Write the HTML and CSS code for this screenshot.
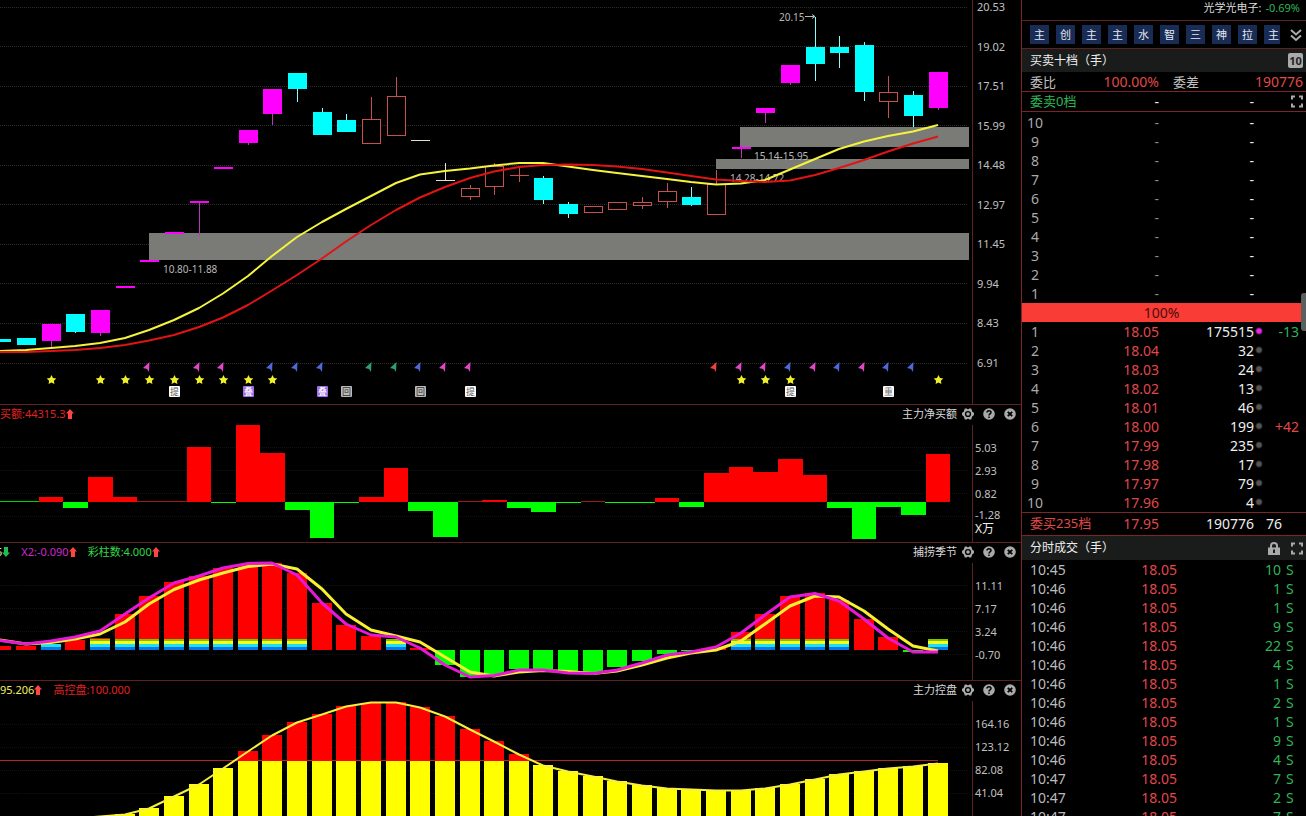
FILE: index.html
```html
<!DOCTYPE html>
<html lang="zh-CN">
<head>
<meta charset="utf-8">
<title>行情</title>
<link rel="stylesheet" href="styles.css">
</head>
<body>
<svg class="sprite" aria-hidden="true">
  <symbol id="up" viewBox="0 0 8 10"><path d="M4 0 8 4.500H6V10H2V4.500H0Z"/></symbol>
  <symbol id="down" viewBox="0 0 8 10"><path d="M4 10 8 5.500H6V0H2V5.500H0Z"/></symbol>
  <symbol id="gear" viewBox="0 0 12 12"><path fill-rule="evenodd" d="M2.800 0.500H4.600L6 1.400 7.400 0.500H9.200L10.200 3.400 12 5V7L10.200 8.600 9.200 11.500H7.400L6 10.600 4.600 11.500H2.800L1.800 8.600 0 7V5L1.800 3.400ZM6 2.900A3.100 3.100 0 1 0 6 9.100 3.100 3.100 0 1 0 6 2.900Z"/><circle cx="6" cy="6" r="1.800"/></symbol>
  <symbol id="help" viewBox="0 0 12 12"><circle cx="6" cy="6" r="5.800"/><path d="M4 4.600C4 2.200 8 2.200 8 4.500 8 6 6 5.800 6 7.400M6 8.400V9.900" fill="none" stroke="#000" stroke-width="1.500"/></symbol>
  <symbol id="close" viewBox="0 0 12 12"><circle cx="6" cy="6" r="5.800"/><path d="M3.800 3.800 8.200 8.200M8.200 3.800 3.800 8.200" fill="none" stroke="#000" stroke-width="1.800"/></symbol>
  <symbol id="expand" viewBox="0 0 12 12"><path d="M1 4V1H4M8 1H11V4M11 8V11H8M4 11H1V8" fill="none" stroke="currentColor" stroke-width="2"/></symbol>
</svg>
<div class="app">
  <main class="charts">
    <section class="panel panel-main">
      <svg class="plot" id="kline" viewBox="0 0 972 404" preserveAspectRatio="none"></svg>
      <div class="axis axis-main">
        <span>20.53</span><span>19.02</span><span>17.51</span><span>15.99</span><span>14.48</span><span>12.97</span><span>11.45</span><span>9.94</span><span>8.43</span><span>6.91</span>
      </div>
    </section>

    <section class="panel">
      <svg class="plot" id="netbuy" viewBox="0 405 972 137" preserveAspectRatio="none"></svg>
      <header class="panel-head">
        <span class="legend red">买额:44315.3<svg class="arrow"><use href="#up"/></svg></span>
        <h2>主力净买额</h2>
        <div class="tools"><button aria-label="设置"><svg><use href="#gear"/></svg></button><button aria-label="帮助"><svg><use href="#help"/></svg></button><button aria-label="关闭"><svg><use href="#close"/></svg></button></div>
      </header>
      <div class="axis"><span>5.03</span><span>2.93</span><span>0.82</span><span class="last">-1.28</span><span class="unit">X万</span></div>
    </section>

    <section class="panel">
      <svg class="plot" id="season" viewBox="0 543 972 137" preserveAspectRatio="none"></svg>
      <header class="panel-head">
        <span class="legend clipped pale">5<svg class="arrow arrow-down"><use href="#down"/></svg></span>
        <span class="legend magenta">X2:-0.090<svg class="arrow"><use href="#up"/></svg></span>
        <span class="legend green">彩柱数:4.000<svg class="arrow"><use href="#up"/></svg></span>
        <h2>捕捞季节</h2>
        <div class="tools"><button aria-label="设置"><svg><use href="#gear"/></svg></button><button aria-label="帮助"><svg><use href="#help"/></svg></button><button aria-label="关闭"><svg><use href="#close"/></svg></button></div>
      </header>
      <div class="axis"><span>11.11</span><span>7.17</span><span>3.24</span><span>-0.70</span></div>
    </section>

    <section class="panel">
      <svg class="plot" id="control" viewBox="0 681 972 135" preserveAspectRatio="none"></svg>
      <header class="panel-head">
        <span class="legend yellow">95.206<svg class="arrow"><use href="#up"/></svg></span>
        <span class="legend red">高控盘:100.000</span>
        <h2>主力控盘</h2>
        <div class="tools"><button aria-label="设置"><svg><use href="#gear"/></svg></button><button aria-label="帮助"><svg><use href="#help"/></svg></button><button aria-label="关闭"><svg><use href="#close"/></svg></button></div>
      </header>
      <div class="axis"><span>164.16</span><span>123.12</span><span>82.08</span><span>41.04</span></div>
    </section>
  </main>

  <aside class="quote">
    <div class="sector"><span>光学光电子:</span><span class="down">-0.69%</span></div>
    <div class="tags">
      <div class="tag-strip">
        <button>主</button><button>创</button><button>主</button><button>主</button><button>水</button><button>智</button><button>三</button><button>神</button><button>拉</button><button>主</button>
      </div>
      <button class="more" aria-label="更多"><svg viewBox="0 0 12 14"><path d="M1 2 6 6.500 11 2M1 7.500 6 12 11 7.500" fill="none" stroke="#aaa" stroke-width="2"/></svg></button>
    </div>
    <div class="section-head"><h3>买卖十档（手）</h3><button class="ten">10</button></div>
    <div class="ratio"><span>委比</span><span class="up ratio-value">100.00%</span><span class="ratio-label">委差</span><span class="up ratio-diff">190776</span></div>
    <div class="total total-ask"><span class="down total-label">委卖0档</span><span class="total-price">-</span><span class="total-vol">-</span><button class="icon" aria-label="展开"><svg><use href="#expand"/></svg></button></div>
    <table class="book asks">
      <colgroup><col class="c-level"><col class="c-price"><col class="c-vol"><col class="c-delta"></colgroup>
      <tbody>
        <tr><th>10</th><td>-</td><td>-</td><td></td></tr>
        <tr><th>9</th><td>-</td><td>-</td><td></td></tr>
        <tr><th>8</th><td>-</td><td>-</td><td></td></tr>
        <tr><th>7</th><td>-</td><td>-</td><td></td></tr>
        <tr><th>6</th><td>-</td><td>-</td><td></td></tr>
        <tr><th>5</th><td>-</td><td>-</td><td></td></tr>
        <tr><th>4</th><td>-</td><td>-</td><td></td></tr>
        <tr><th>3</th><td>-</td><td>-</td><td></td></tr>
        <tr><th>2</th><td>-</td><td>-</td><td></td></tr>
        <tr><th>1</th><td>-</td><td>-</td><td></td></tr>
      </tbody>
    </table>
    <div class="balance"><div class="balance-fill">100%</div><div class="thumb"></div></div>
    <table class="book bids">
      <colgroup><col class="c-level"><col class="c-price"><col class="c-vol"><col class="c-delta"></colgroup>
      <tbody>
        <tr class="hot"><th>1</th><td>18.05</td><td>175515</td><td class="down">-13</td></tr>
        <tr><th>2</th><td>18.04</td><td>32</td><td></td></tr>
        <tr><th>3</th><td>18.03</td><td>24</td><td></td></tr>
        <tr><th>4</th><td>18.02</td><td>13</td><td></td></tr>
        <tr><th>5</th><td>18.01</td><td>46</td><td></td></tr>
        <tr><th>6</th><td>18.00</td><td>199</td><td class="up">+42</td></tr>
        <tr><th>7</th><td>17.99</td><td>235</td><td></td></tr>
        <tr><th>8</th><td>17.98</td><td>17</td><td></td></tr>
        <tr><th>9</th><td>17.97</td><td>79</td><td></td></tr>
        <tr><th>10</th><td>17.96</td><td>4</td><td></td></tr>
      </tbody>
    </table>
    <div class="total total-bid"><span class="up total-label">委买235档</span><span class="up total-price">17.95</span><span class="total-vol">190776</span><span class="total-count">76</span></div>
    <div class="section-head ticks-head"><h3>分时成交（手）</h3>
      <button class="icon" aria-label="锁定"><svg viewBox="0 0 12 13"><path d="M3 6V3.500Q3 1 6 1T9 3.500V6" fill="none" stroke="currentColor" stroke-width="2"/><path d="M0 5.500H12V13H0Z" fill="currentColor"/><path d="M6 7.500V11" stroke="#1a1c1c" stroke-width="2"/></svg></button>
      <button class="icon" aria-label="展开"><svg><use href="#expand"/></svg></button>
    </div>
    <table class="ticks">
      <colgroup><col class="t-time"><col class="t-price"><col class="t-vol"><col class="t-side"></colgroup>
      <tbody>
        <tr><td>10:45</td><td>18.05</td><td>10</td><td>S</td></tr>
        <tr><td>10:46</td><td>18.05</td><td>1</td><td>S</td></tr>
        <tr><td>10:46</td><td>18.05</td><td>1</td><td>S</td></tr>
        <tr><td>10:46</td><td>18.05</td><td>9</td><td>S</td></tr>
        <tr><td>10:46</td><td>18.05</td><td>22</td><td>S</td></tr>
        <tr><td>10:46</td><td>18.05</td><td>4</td><td>S</td></tr>
        <tr><td>10:46</td><td>18.05</td><td>1</td><td>S</td></tr>
        <tr><td>10:46</td><td>18.05</td><td>2</td><td>S</td></tr>
        <tr><td>10:46</td><td>18.05</td><td>1</td><td>S</td></tr>
        <tr><td>10:46</td><td>18.05</td><td>9</td><td>S</td></tr>
        <tr><td>10:46</td><td>18.05</td><td>4</td><td>S</td></tr>
        <tr><td>10:47</td><td>18.05</td><td>7</td><td>S</td></tr>
        <tr><td>10:47</td><td>18.05</td><td>2</td><td>S</td></tr>
        <tr><td>10:47</td><td>18.05</td><td>7</td><td>S</td></tr>
      </tbody>
    </table>
  </aside>
</div>
<script src="charts.js"></script>
</body>
</html>
```
FILE: styles.css
```css
* { box-sizing: border-box; }

body {
  margin: 0;
  background: #000;
  color: #c0c0c0;
  font-family: "Noto Sans", "Noto Sans CJK SC", sans-serif;
  font-size: 11px;
}

button {
  margin: 0;
  padding: 0;
  border: 0;
  background: none;
  color: inherit;
  font: inherit;
  cursor: pointer;
}

h2, h3 { margin: 0; font-weight: 400; }

.sprite { display: none; }

.app {
  display: grid;
  grid-template-columns: minmax(0, 1fr) 285px;
  height: 100vh;
  overflow: hidden;
}

/* chart column */
.charts {
  display: grid;
  grid-template-rows: 405fr 138fr 138fr 135fr;
  min-height: 0;
}

.panel {
  display: grid;
  grid-template-columns: minmax(0, 1fr) 49px;
  grid-template-rows: 20px minmax(0, 1fr);
  min-height: 0;
  border-bottom: 1px solid #5c2222;
  overflow: hidden;
}

.panel:last-child { border-bottom: 0; }

.plot {
  grid-column: 1;
  grid-row: 1 / 3;
  width: 100%;
  height: 100%;
  display: block;
}

.panel-head {
  grid-column: 1 / 3;
  grid-row: 1;
  z-index: 1;
  display: flex;
  align-items: center;
  height: 18px;
  padding-right: 5px;
  line-height: 18px;
  white-space: nowrap;
}

.panel-head h2 {
  margin-left: auto;
  margin-right: 5px;
  font-size: 11px;
  color: #d8d8d8;
}

.legend { display: flex; align-items: center; margin-right: 11px; }
.clipped { margin-left: -4px; }

.arrow { width: 8px; height: 10px; fill: #f44; }
.arrow-down { fill: #2b5; }

.red { color: #e02020; }
.magenta { color: #d028d0; }
.green { color: #2fd84a; }
.yellow { color: #f0f060; }
.pale { color: #d8e8c0; }

.tools { display: flex; gap: 9px; }
.tools button { display: block; height: 12px; }
.tools svg { display: block; width: 12px; height: 12px; fill: #aaa; }

.axis {
  grid-column: 2;
  grid-row: 2;
  display: flex;
  flex-direction: column;
  padding: 11px 0 0 2px;
  border-left: 1px solid #5c2222;
  line-height: 23px;
}

.axis-main {
  grid-row: 1 / 3;
  justify-content: space-between;
  padding: 0 0 34px 4px;
  line-height: 14px;
}

.last { line-height: 20px; }
.unit { font-size: 12px; line-height: 12px; margin-top: -2px; color: #eee; }

.note { font-size: 10px; fill: #b8b8b8; }
.badge-text { font-size: 9px; text-anchor: middle; }

/* quote column */
.quote {
  display: flex;
  flex-direction: column;
  min-height: 0;
  border-left: 1px solid #7a2626;
  font-size: 14px;
  overflow: hidden;
}

.quote > * { flex-shrink: 0; }

.up { color: #e04848; }
.down { color: #2fb558; }

.sector {
  display: flex;
  justify-content: flex-end;
  gap: 4px;
  height: 21px;
  padding-right: 6px;
  border-bottom: 1px solid #5c2222;
  font-size: 11px;
  line-height: 16px;
  color: #ddd;
}

.tags {
  display: flex;
  align-items: center;
  gap: 10px;
  height: 28px;
  padding: 0 4px 0 8px;
  border-bottom: 1px solid #5c2222;
}

.tag-strip { display: flex; flex: 1; gap: 7px; min-width: 0; overflow: hidden; }

.tag-strip button {
  flex: 0 0 19px;
  height: 19px;
  background: #182c55;
  color: #e4e8f0;
  font-size: 11px;
  line-height: 19px;
}

.more, .more svg { display: block; width: 12px; height: 14px; }

.section-head {
  display: flex;
  align-items: center;
  gap: 11px;
  height: 23px;
  padding: 0 3px 0 8px;
  background: #1a1c1c;
  color: #eee;
}

.section-head h3 { flex: 1; font-size: 12px; line-height: 22px; }
.ticks-head { height: 24px; }

.ten {
  width: 15px;
  height: 15px;
  border-radius: 2px;
  background: #aaa;
  color: #222;
  font-size: 11px;
  font-weight: 700;
  line-height: 15px;
}

.icon { display: block; color: #aaa; }
.icon svg { display: block; width: 12px; height: 13px; }

.ratio {
  display: grid;
  grid-template-columns: 50px 79px 58px 1fr;
  height: 20px;
  padding: 0 3px 0 8px;
  border-bottom: 1px solid #7a2626;
  font-size: 13px;
  line-height: 20px;
}

.ratio-value, .ratio-diff { text-align: right; font-size: 14px; }
.ratio-label { padding-left: 14px; }

.total {
  display: grid;
  grid-template-columns: 80px 49px 95px 1fr;
  align-items: center;
  padding: 0 3px 0 8px;
  border-bottom: 1px solid #7a2626;
  line-height: 19px;
}

.total-ask { height: 20px; }
.total-bid { height: 24px; padding-bottom: 2px; border-top: 1px solid #7a2626; }
.total-label { font-size: 13px; white-space: nowrap; }
.total-price, .total-vol { text-align: right; color: #eee; }
.total-price.up { color: #e04848; }
.total-count { padding-left: 12px; color: #eee; }
.total .icon { justify-self: end; }

table { width: 100%; table-layout: fixed; border-collapse: collapse; }
td, th { height: 19px; padding: 0; line-height: 19px; font-weight: 400; text-align: right; }

.c-level { width: 26px; }
.c-price { width: 111px; }
.c-vol { width: 95px; }

.book th { text-align: center; color: #aaa; }
.book td:nth-child(2) { color: #e04848; }
.book td:nth-child(3) { color: #eee; }
.book td:nth-child(4) { padding-right: 7px; }
.asks { margin-top: 1px; }
.asks td:nth-child(2) { color: #7d8f7d; }

/* order-change marker beside each bid volume */
.bids td:nth-child(4) {
  background: radial-gradient(circle at 5px 9px, #555 2px, transparent 4px);
}
.bids .hot td:nth-child(4) {
  background: radial-gradient(circle at 5px 9px, #e828e8 2px, transparent 4px);
}

.balance { position: relative; padding-right: 5px; }
.balance-fill {
  height: 19px;
  background: #f93c36;
  color: #4a0c0c;
  line-height: 19px;
  text-align: center;
}
.thumb {
  position: absolute;
  top: -10px;
  right: 0;
  width: 5px;
  height: 38px;
  border-radius: 3px 0 0 3px;
  background: #59605e;
}

.t-time { width: 54px; }
.t-price { width: 101px; }
.t-vol { width: 104px; }
.ticks td:first-child { padding-left: 8px; text-align: left; color: #bbb; }
.ticks td:nth-child(2) { color: #e04848; }
.ticks td:nth-child(3) { color: #2fb558; }
.ticks td:nth-child(4) { padding-left: 5px; text-align: left; color: #2fb558; }
```
FILE: charts.js
```js
const NS = 'http://www.w3.org/2000/svg';
const STEP = 24.64;
const cx = i => Math.floor(1.9 + STEP * i);

function add(svg, tag, attrs, text) {
  const el = document.createElementNS(NS, tag);
  for (const k in attrs) el.setAttribute(k, attrs[k]);
  if (text) el.textContent = text;
  svg.appendChild(el);
  return el;
}
function rect(svg, x, y, width, height, fill) {
  add(svg, 'rect', { x, y, width, height, fill, 'shape-rendering': 'crispEdges' });
}
function line(svg, ys, stroke, width) {
  const points = ys.map((y, i) => (i ? cx(i) : 0) + ',' + y).join(' ');
  add(svg, 'polyline', { points, stroke, fill: 'none', 'stroke-width': width, 'stroke-linejoin': 'round' });
}
function grid(svg, ys, stroke) {
  for (const y of ys) add(svg, 'line', { x1: 0, x2: 968, y1: y + 0.5, y2: y + 0.5, stroke, 'stroke-dasharray': '1 1' });
}

/* daily candles: kind, body top, body bottom, wick top, wick bottom */
const candles = [
  ['c',339,342],['c',338,345],['m',324,341,324,347],['c',314,332,314,333],['m',310,333,310,336],
  ['m',286,288],['m',260,262],['m',232,234],['m',201,203,201,236],['m',167,169],
  ['m',130,143,130,145],['m',89,114,89,125],['c',73,89,73,102],['c',112,135,108,135],['c',120,132,114,132],
  ['r',119,144,97,144],['r',96,136,77,136],['w',140,141],['w',180,181,163,181],['r',188,197,185,200],
  ['r',166,187,163,195],['x',175,176,168,182],['c',178,200,176,204],['c',204,214,202,218],['r',206,213],
  ['r',202,210],['r',202,206,197,209],['r',191,202,183,208],['c',197,205,187,206],['r',184,215,170,215],
  ['m',147,149,145,158],['m',108,113,108,123],['m',65,83,65,85],['c',47,64,17,81],['c',47,53,36,68],
  ['c',45,92,42,101],['r',92,102,76,118],['c',95,116,91,127],['m',72,108,72,110]
];
const bodyFill = { c: '#00ffff', m: '#ff00ff', w: '#e0e0d0', x: '#c85050' };
const wickFill = { c: '#80ffff', m: '#b838b8', r: '#c85050', w: '#e0e0d0', x: '#c85050' };

const k = document.getElementById('kline');
grid(k, [7,46,86,125,165,204,244,283,323,363], '#2c2c28');
rect(k, 149, 233, 820, 27, '#7a7b77');
rect(k, 740, 127, 229, 20, '#7a7b77');
rect(k, 716, 159, 253, 10, '#7a7b77');
candles.forEach(([kind, top, bottom, hi, lo], i) => {
  const x = cx(i);
  if (hi !== undefined) {
    if (hi < top) rect(k, x, hi, 1, top - hi, wickFill[kind]);
    if (lo > bottom) rect(k, x, bottom, 1, lo - bottom, wickFill[kind]);
  }
  if (kind === 'r') {
    add(k, 'rect', { x: x - 8.5, y: top + 0.5, width: 18, height: bottom - top - 1, fill: '#000', stroke: '#c85050' });
  } else {
    rect(k, x - 9, top, 19, bottom - top, bodyFill[kind]);
  }
});
const note = (x, y, text) => add(k, 'text', { x, y, class: 'note' }, text);
note(163, 273, '10.80-11.88');
note(754, 160, '15.14-15.95');
note(730, 182, '14.28-14.72');
note(779, 21, '20.15');
add(k, 'path', { d: 'M805 16.5H815M812 14.5L815 16.5L812 18.5', stroke: '#b8b8b8', fill: 'none' });
line(k, [351,350,348,346,343,338,330,320,308,293.5,276,256,237,222,209,196,183,174.5,171,168.5,165.5,163,163,166.5,170,173,176,179,182,184.5,183.5,180,169.5,159,149,141.5,136,131.5,125], '#f4f43c', 2);
line(k, [352,352,351,350,348,345,340.5,335,327,317.5,305,290.5,275,258.5,241.5,225,210,197.5,187,178,171.5,167,165,164.5,165,166.5,169,172.5,176,179.5,181,182,180.5,175,168,160,151.5,143.5,136.5], '#e01414', 2);

const flags = { '#e048c8': [6,8,9,18,19,30,31,33,35], '#5068d8': [11,12,13,17,32,34,36,37], '#2f9f70': [15,16], '#f04040': [29] };
for (const color in flags) for (const i of flags[color]) {
  const x = cx(i);
  add(k, 'path', { d: `M${x + 0.5} 362L${x - 6} 368L${x - 2} 369L${x} 372Z`, fill: color });
}
for (const i of [2,4,5,6,7,8,9,10,11,30,31,32,38]) {
  let pts = '';
  for (let n = 0; n < 10; n++) {
    const r = n % 2 ? 2.5 : 5, a = Math.PI * n / 5;
    pts += (cx(i) + 0.5 + r * Math.sin(a)).toFixed(1) + ',' + (380 - r * Math.cos(a)).toFixed(1) + ' ';
  }
  add(k, 'polygon', { points: pts, fill: '#f0f028' });
}
const badges = [[7,'提','#fff','#555'],[10,'叠','#a070e8','#fff'],[13,'叠','#a070e8','#fff'],[14,'回','#bbb','#333'],[17,'回','#bbb','#333'],[19,'提','#fff','#555'],[32,'提','#fff','#555'],[36,'重','#fff','#777']];
for (const [i, text, bg, fg] of badges) {
  add(k, 'rect', { x: cx(i) - 5, y: 386, width: 11, height: 11, rx: 1, fill: bg });
  add(k, 'text', { x: cx(i) + 0.5, y: 395, class: 'badge-text', fill: fg }, text);
}

/* net buying: bar end on either side of the zero line */
const nb = document.getElementById('netbuy');
grid(nb, [447,470,493,516], '#121212');
const flow = [501,501,497,508,477,497,501,501,447,503,425,453,510,538,503,497,468,511,537,501,500,508,512,503,501,503,503,498,507,473,467,472,459,475,508,539,507,515,454];
flow.forEach((v, i) => {
  const x = Math.max(0, Math.round(1.7 + STEP * i - 12.3));
  const end = Math.round(1.7 + STEP * (i + 1) - 12.3);
  if (i < 2) rect(nb, x, 501, end - x, 1, '#00d000');
  else if (v < 502) rect(nb, x, v, end - x, 502 - v, v === 501 ? '#a01818' : '#ff0000');
  else rect(nb, x, 502, end - x, v - 502, '#00ff00');
});

/* season histogram with layered stripes on strong days */
const se = document.getElementById('season');
grid(se, [585,608,631,654], '#121212');
const hist = [646,646,0,640,638,614,596,582,576,568,564,563,573,603,625,636,0,648,665,677,675,669,669,671,672,667,661,654,651,648,632,614,596,593,600,619,637,652,0];
const striped = [4,5,6,7,8,9,10,11,12,16,30,31,32,33,34,38];
hist.forEach((v, i) => {
  const x = cx(i) - 10;
  if (v && v < 650) rect(se, x, v, 20, 650 - v, '#ff0000');
  if (v > 650) rect(se, x, 650, 20, v - 650, '#00ff00');
  if (striped.includes(i)) {
    rect(se, x, 639, 20, 2, '#78c800');
    rect(se, x, 641, 20, 3, '#f4ff20');
    rect(se, x, 644, 20, 3, '#20e0f0');
    rect(se, x, 647, 20, 3, '#0878e8');
  }
});
rect(se, cx(2) - 10, 644, 20, 3, '#20e0f0');
rect(se, cx(2) - 10, 647, 20, 3, '#0878e8');
line(se, [640,644,642.5,639,634,622,604,589.5,580,573,566.5,564,569,589,614,630,636,642,657,672,676,672,670.5,671.5,673.5,671,665,658,653,650,641,624,606,596,597,611,629,646,651], '#f8f030', 3);
line(se, [640.5,644,641,637,631,614,598,583,576,568,563.5,563,575,603,624,635,637,648,665,677,675.5,670,670,673,673.5,670,663,655,652,647,633,615,597,593.5,601,619,638,652,652], '#e818d8', 3);

/* control level: yellow below the threshold, red above it */
const co = document.getElementById('control');
grid(co, [724,747,770,793], '#121212');
const ctl = [818,818,818,818,816,814,808,796,784,768,751,735,722,714,706,703,702,707,716,729,741,754,765,771,776,781,785,788,789,790,790,788,784,779,774,771,768,766,763];
rect(co, 0, 760, 938, 1, '#b02828');
ctl.forEach((v, i) => {
  const x = cx(i) - 10;
  if (v < 761) rect(co, x, v, 20, 761 - v, '#ff0000');
  if (v < 816) rect(co, x, Math.max(v, 761), 20, 816 - Math.max(v, 761), '#ffff00');
});
/* the curve crests between the two tallest bars */
const curve = ctl.map(v => v + 0.5);
curve[15] = 702.5;
line(co, curve, '#f8f040', 2);
```
